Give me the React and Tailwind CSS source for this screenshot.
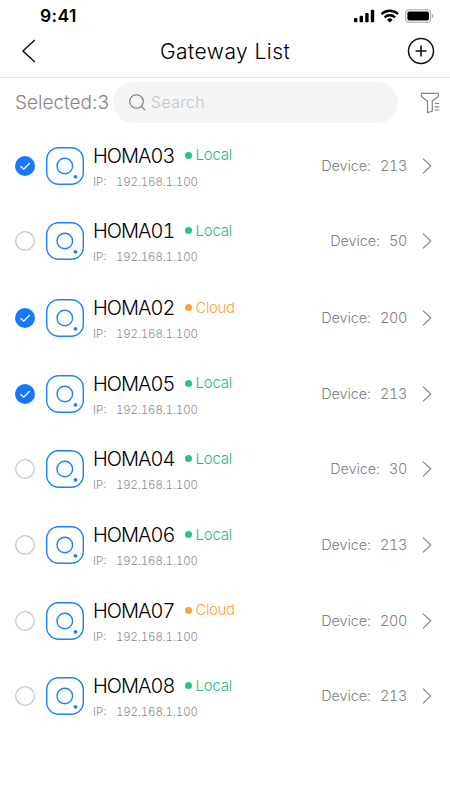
import React from "react";

const gateways = [
  { name: "HOMA03", mode: "Local", devices: 213, selected: true, height: "h-[75px]" },
  { name: "HOMA01", mode: "Local", devices: 50, selected: false, height: "h-[76px]" },
  { name: "HOMA02", mode: "Cloud", devices: 200, selected: true, height: "h-[78px]" },
  { name: "HOMA05", mode: "Local", devices: 213, selected: true, height: "h-[73px]" },
  { name: "HOMA04", mode: "Local", devices: 30, selected: false, height: "h-[78px]" },
  { name: "HOMA06", mode: "Local", devices: 213, selected: false, height: "h-[74px]" },
  { name: "HOMA07", mode: "Cloud", devices: 200, selected: false, height: "h-[77px]" },
  { name: "HOMA08", mode: "Local", devices: 213, selected: false, height: "h-[74px]" },
];

function StatusBar() {
  return (
    <div className="flex h-8 items-center pl-[40px] pr-[16px]">
      <span className="text-[17.5px] leading-8 font-semibold tracking-[0.4px] text-black">9:41</span>
      <svg className="ml-auto" width="80" height="16" viewBox="0 0 80 16" fill="none">
        <g fill="#000">
          <rect x="0" y="10" width="3.4" height="4.2" rx="1" />
          <rect x="5.6" y="7.8" width="3.4" height="6.4" rx="1" />
          <rect x="11.2" y="5" width="3.4" height="9.2" rx="1" />
          <rect x="16.8" y="1.8" width="3.4" height="12.4" rx="1" />
        </g>
        <path d="M27.5 6.2a12 12 0 0 1 16.6 0" stroke="#000" strokeWidth="2.5" />
        <path d="M30.5 9.4a7.6 7.6 0 0 1 10.6 0" stroke="#000" strokeWidth="2.3" />
        <path d="M33 11.7a4 4 0 0 1 5.6 0L35.8 14.4Z" fill="#000" />
        <rect x="51.7" y="1.7" width="25" height="12.6" rx="3.6" stroke="#a9a9a9" strokeWidth="1.1" />
        <rect x="53.4" y="3.5" width="21.6" height="9" rx="2" fill="#000" />
        <path d="M78.1 6v4c1.8-.7 1.8-3.3 0-4Z" fill="#a9a9a9" />
      </svg>
    </div>
  );
}

function Check({ selected }) {
  return (
    <svg className="shrink-0" width="20" height="20" viewBox="0 0 20 20" fill="none">
      {selected ? (
        <>
          <circle cx="10" cy="10" r="10" fill="#1677ff" />
          <path d="M5.5 10.2 8.8 13.2 14.8 7" stroke="#fff" strokeWidth="1.3" />
        </>
      ) : (
        <circle cx="10" cy="10" r="9.3" stroke="#c9c9c9" strokeWidth="1.3" />
      )}
    </svg>
  );
}

function GatewayIcon() {
  return (
    <svg className="ml-[11px] shrink-0" width="38" height="38" viewBox="0 0 38 38" fill="none">
      <rect x=".7" y=".7" width="36.6" height="36.6" rx="12" stroke="#1684fc" strokeWidth="1.4" />
      <circle cx="18.8" cy="19" r="7.8" stroke="#1684fc" strokeWidth="1.4" />
      <circle cx="29.5" cy="29.8" r="1.9" fill="#1684fc" />
    </svg>
  );
}

function GatewayRow({ name, mode, devices, selected, height }) {
  const local = mode === "Local";
  return (
    <li className={`flex items-center pl-[15px] pr-[18px] ${height}`}>
      <Check selected={selected} />
      <GatewayIcon />
      <div className="ml-[9px] h-[48px]">
        <div className="flex h-[28px] items-center">
          <span className="w-[92px] text-[20px] font-light tracking-[-1px] tabular-nums text-black">{name}</span>
          <span className={`mb-px size-[7px] rounded-full ${local ? "bg-[#25c489]" : "bg-[#ffa03f]"}`} />
          <span
            className={`ml-[3.5px] text-[15px] font-light ${
              local ? "tracking-[-0.2px] text-[#20bd82]" : "tracking-[-0.4px] text-[#ffa03f]"
            }`}
          >
            {mode}
          </span>
        </div>
        <div className="flex h-[24px] items-center pt-[2px] text-[11.5px] font-light text-[#8c8c8c]">
          <span className="w-[23px]">IP:</span>
          <span className="tracking-[-0.15px] tabular-nums">192.168.1.100</span>
        </div>
      </div>
      <div className="ml-auto flex items-center text-[14.5px] font-light text-[#808080]">
        <span className="tracking-[-0.1px]">Device:</span>
        <span className="ml-[9px] tracking-[-0.4px] tabular-nums">{devices}</span>
      </div>
      <svg className="ml-[15px] shrink-0" width="10" height="16" viewBox="0 0 10 16" fill="none">
        <path d="M1 .7 8.8 8 1 15.3" stroke="#858585" strokeWidth="1.15" />
      </svg>
    </li>
  );
}

export default function App() {
  return (
    <main className="flex h-[800px] w-[450px] flex-col overflow-hidden bg-white font-['Inter','Noto_Sans_CJK_SC',sans-serif]">
      <StatusBar />
      <header className="flex h-[46px] items-center border-b border-[#e5e6e8] pl-[21px] pr-[15px] pb-[7px]">
        <svg width="15" height="24" viewBox="0 0 15 24" fill="none">
          <path d="M13.8 1 2 12l11.8 11" stroke="#111" strokeWidth="1.5" />
        </svg>
        <h1 className="ml-[124px] pt-px text-[21px] font-light tracking-[0.45px] text-black">Gateway List</h1>
        <svg className="ml-auto" width="28" height="28" viewBox="0 0 28 28" fill="none" stroke="#111">
          <circle cx="14" cy="14" r="12.5" strokeWidth="1.5" />
          <path d="M8.5 14h11M14 8.5v11" strokeWidth="1.6" />
        </svg>
      </header>
      <div className="flex h-[50px] items-center pb-px pl-[15px] pr-[10px]">
        <span className="w-[98px] shrink-0 whitespace-nowrap pt-px text-[19px] font-light text-[#858585]">Selected:3</span>
        <div className="flex h-[41px] w-[285px] shrink-0 items-center rounded-full bg-[#f4f5f7] pl-[16px]">
          <svg width="17" height="17" viewBox="0 0 17 17" fill="none" stroke="#777" strokeWidth="1.1">
            <circle cx="7.5" cy="7.5" r="6.8" />
            <path d="m12.3 12.3 3.8 3.8" />
          </svg>
          <span className="ml-[5px] pb-px text-[16px] font-light tracking-[0.3px] text-[#c5c6c8]">Search</span>
        </div>
        <svg className="ml-auto" width="20" height="22" viewBox="0 0 20 22" fill="none" stroke="#858585" strokeWidth="1.2" strokeLinejoin="round">
          <path d="M2 1.3h15.7q.8 0 .8.8v1.4q0 .8-.6 1.3L12.3 9v10L7.5 20.8V9.2L1.8 4.8q-.5-.5-.5-1.2V2.1q0-.8.7-.8Z" />
          <path d="M14.7 11.5h4.5M14.7 14.8h4.5M14.7 18h4.5" />
        </svg>
      </div>
      <ul>
        {gateways.map((gateway) => (
          <GatewayRow key={gateway.name} {...gateway} />
        ))}
      </ul>
    </main>
  );
}
